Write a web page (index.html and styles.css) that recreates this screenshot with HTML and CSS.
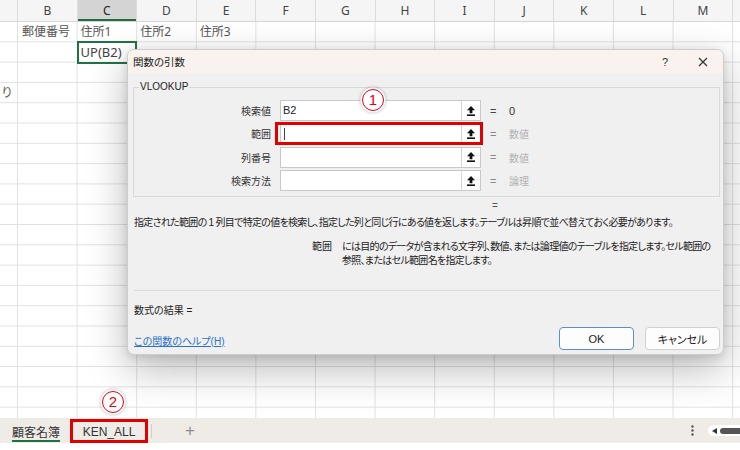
FILE: index.html
```html
<!DOCTYPE html>
<html lang="ja">
<head>
<meta charset="utf-8">
<title>関数の引数</title>
<link rel="stylesheet" href="styles.css">
</head>
<body>
<div class="app">
  <div class="sheet">
    <div class="col-heads">
      <div class="ch ch-a"></div>
      <div class="ch">B</div>
      <div class="ch ch-active">C</div>
      <div class="ch">D</div>
      <div class="ch">E</div>
      <div class="ch">F</div>
      <div class="ch">G</div>
      <div class="ch">H</div>
      <div class="ch">I</div>
      <div class="ch">J</div>
      <div class="ch">K</div>
      <div class="ch">L</div>
      <div class="ch">M</div>
    </div>
    <div class="grid">
      <div class="cell pos-b1">郵便番号</div>
      <div class="cell pos-c1">住所1</div>
      <div class="cell pos-d1">住所2</div>
      <div class="cell pos-e1">住所3</div>
      <div class="cell pos-c2 selected">UP(B2)</div>
      <div class="cell pos-a4">り</div>
    </div>
  </div>

  <div class="tabbar">
    <div class="tab tab-1">顧客名簿</div>
    <div class="tab tab-2">KEN_ALL</div>
    <div class="tab-sep"></div>
    <div class="tab-add">+</div>
    <div class="tab-spacer"></div>
    <svg class="tab-more" width="3" height="11" viewBox="0 0 3 11"><circle cx="1.5" cy="1.5" r="1.2" fill="#555"/><circle cx="1.5" cy="5.5" r="1.2" fill="#555"/><circle cx="1.5" cy="9.5" r="1.2" fill="#555"/></svg>
    <div class="nav-pill">
      <svg class="nav-prev" width="5" height="6" viewBox="0 0 5 6"><path d="M0 3 L5 0 V6 Z" fill="#333"/></svg>
      <span class="nav-thumb"></span>
    </div>
  </div>
  <div class="bottom-strip"></div>

  <div class="dialog">
    <div class="dlg-title">
      <span class="dlg-title-text">関数の引数</span>
      <span class="dlg-help">?</span>
      <svg class="dlg-close" width="10" height="10" viewBox="0 0 10 10"><path d="M1 1 L9 9 M9 1 L1 9" stroke="#333" stroke-width="1.2" fill="none"/></svg>
    </div>
    <div class="dlg-body">
      <fieldset class="group">
        <legend class="group-legend">VLOOKUP</legend>
        <div class="args">
          <div class="arg-label">検索値</div>
          <div class="inp"><span class="inp-text">B2</span><span class="inp-btn"><svg width="8" height="10" viewBox="0 0 8 10"><path d="M4 0 L8 4.2 H5.4 V7.2 H2.6 V4.2 H0 Z" fill="#111"/><rect x="0" y="8.4" width="8" height="1.6" fill="#111"/></svg></span></div>
          <div class="arg-eq strong">=</div>
          <div class="arg-val strong">0</div>

          <div class="arg-label">範囲</div>
          <div class="inp hl"><span class="inp-text"><span class="caret"></span></span><span class="inp-btn"><svg width="8" height="10" viewBox="0 0 8 10"><path d="M4 0 L8 4.2 H5.4 V7.2 H2.6 V4.2 H0 Z" fill="#111"/><rect x="0" y="8.4" width="8" height="1.6" fill="#111"/></svg></span></div>
          <div class="arg-eq">=</div>
          <div class="arg-val">数値</div>

          <div class="arg-label">列番号</div>
          <div class="inp"><span class="inp-text"></span><span class="inp-btn"><svg width="8" height="10" viewBox="0 0 8 10"><path d="M4 0 L8 4.2 H5.4 V7.2 H2.6 V4.2 H0 Z" fill="#111"/><rect x="0" y="8.4" width="8" height="1.6" fill="#111"/></svg></span></div>
          <div class="arg-eq">=</div>
          <div class="arg-val">数値</div>

          <div class="arg-label">検索方法</div>
          <div class="inp"><span class="inp-text"></span><span class="inp-btn"><svg width="8" height="10" viewBox="0 0 8 10"><path d="M4 0 L8 4.2 H5.4 V7.2 H2.6 V4.2 H0 Z" fill="#111"/><rect x="0" y="8.4" width="8" height="1.6" fill="#111"/></svg></span></div>
          <div class="arg-eq">=</div>
          <div class="arg-val">論理</div>
        </div>
      </fieldset>
      <div class="eq-line">=</div>
      <div class="desc">指定された範囲の 1 列目で特定の値を検索し、指定した列と同じ行にある値を返します。テーブルは昇順で並べ替えておく必要があります。</div>
      <div class="arg-desc">
        <div class="arg-desc-name">範囲</div>
        <div class="arg-desc-text">には目的のデータが含まれる文字列、数値、または論理値のテーブルを指定します。セル範囲の<br>参照、またはセル範囲名を指定します。</div>
      </div>
      <div class="sep"></div>
      <div class="result">数式の結果 =</div>
      <div class="foot">
        <a class="help-link" href="#">この関数のヘルプ(H)</a>
        <button class="btn btn-ok">OK</button>
        <button class="btn btn-cancel">キャンセル</button>
      </div>
    </div>
  </div>

  <div class="marker marker-1">1</div>
  <div class="marker marker-2">2</div>
</div>
</body>
</html>
```

FILE: styles.css
```css
* { box-sizing: border-box; }
html, body { margin: 0; padding: 0; }
body {
  width: 740px;
  height: 450px;
  overflow: hidden;
  background: #fff;
  font-family: "Noto Sans", "Noto Sans CJK JP", sans-serif;
}
.app {
  position: relative;
  width: 740px;
  height: 450px;
  display: flex;
  flex-direction: column;
}

/* ---------- sheet ---------- */
.sheet {
  flex: 1;
  display: flex;
  flex-direction: column;
  overflow: hidden;
}
.col-heads {
  display: flex;
  height: 22px;
  flex: none;
  background: #f5f5f5;
  border-bottom: 1px solid #d6d6d6;
}
.ch {
  flex: none;
  width: 59.6px;
  border-right: 1px solid #dcdcdc;
  text-align: center;
  font-size: 12px;
  line-height: 21px;
  color: #444;
}
.ch-a { width: 18px; }
.ch-active {
  background: #d4d4d4;
  color: #222;
  box-shadow: inset 0 -2px 0 #1e6e42;
}
.grid {
  flex: 1;
  display: grid;
  grid-template-columns: 18px repeat(12, 59.6px);
  grid-auto-rows: 20.3px;
  background-image:
    linear-gradient(to right, transparent 58.6px, #e1e1e1 58.6px),
    linear-gradient(to bottom, transparent 19.3px, #e1e1e1 19.3px);
  background-size: 59.6px 100%, 100% 20.3px;
  background-position: 18px 0, 0 0;
  background-repeat: repeat-x, repeat-y;
}
.cell {
  font-family: "Noto Sans", "Noto Sans CJK JP", sans-serif;
  font-size: 12px;
  line-height: 20px;
  color: #555;
  padding: 0 4px;
  white-space: nowrap;
  overflow: hidden;
}
.pos-b1 { grid-column: 2; grid-row: 1; }
.pos-c1 { grid-column: 3; grid-row: 1; padding-left: 3px; }
.pos-d1 { grid-column: 4; grid-row: 1; padding-left: 3px; }
.pos-e1 { grid-column: 5; grid-row: 1; padding-left: 3px; }
.pos-c2 { grid-column: 3; grid-row: 2; }
.pos-a4 { grid-column: 1; grid-row: 4; padding: 0 0 0 1px; overflow: visible; }
.selected {
  margin: -1px 0 -1px -1px;
  border: 2px solid #217346;
  padding-left: 2px;
  line-height: 18px;
  color: #444;
  font-size: 13px;
}

/* ---------- tab bar ---------- */
.tabbar {
  flex: none;
  height: 25px;
  background: #efebe7;
  display: flex;
  align-items: center;
}
.tab {
  align-self: flex-start;
  font-size: 12px;
  color: #333;
  white-space: nowrap;
}
.tab-1 {
  margin-left: 12px;
  margin-top: 6px;
  height: 18px;
  line-height: 16px;
  border-bottom: 2px solid #1e7145;
  font-family: "Noto Sans CJK JP", sans-serif;
}
.tab-2 {
  margin-left: 10px;
  margin-top: 1px;
  width: 78px;
  height: 24px;
  border: 3px solid #e10000;
  padding-top: 2px;
  line-height: 16px;
  text-align: center;
  font-family: "Liberation Sans", sans-serif;
  color: #333;
}
.tab-sep {
  width: 1px;
  height: 14px;
  background: #d2cdc8;
  margin-left: 3px;
}
.tab-add {
  margin-left: 33px;
  font-size: 17px;
  line-height: 17px;
  color: #8d8d8d;
  font-family: "Liberation Sans", sans-serif;
}
.tab-spacer { flex: 1; }
.tab-more { margin-right: 14px; }
.nav-pill {
  width: 32px;
  height: 11px;
  background: #fff;
  border-radius: 6px 0 0 6px;
  display: flex;
  align-items: center;
  padding-left: 4px;
}
.nav-prev { flex: none; }
.nav-thumb {
  margin-left: 3px;
  flex: 1;
  height: 6px;
  background: #555;
  border-radius: 3px 0 0 3px;
}
.bottom-strip {
  flex: none;
  height: 7px;
  background: #fff;
}

/* ---------- dialog ---------- */
.dialog {
  position: absolute;
  left: 127px;
  top: 49px;
  width: 597px;
  height: 306px;
  background: #f0f0f0;
  border: 1px solid #cdcdcd;
  border-radius: 7px;
  box-shadow: 0 14px 40px rgba(0, 0, 0, 0.28), 0 2px 8px rgba(0, 0, 0, 0.12);
  overflow: hidden;
  font-family: "Liberation Sans", "Noto Sans CJK JP", sans-serif;
  font-size: 10px;
  color: #222;
  font-feature-settings: "palt";
  display: flex;
  flex-direction: column;
}
.dlg-title {
  flex: none;
  height: 23px;
  background: #f9f2ee;
  display: flex;
  align-items: center;
  padding-left: 5px;
}
.dlg-title-text { font-size: 10.5px; color: #222; }
.dlg-help {
  margin-left: auto;
  width: 12px;
  text-align: center;
  font-size: 11px;
  color: #333;
}
.dlg-close {
  margin-left: 27px;
  margin-right: 15px;
}
.dlg-body {
  flex: 1;
  padding: 0 3px 0 5px;
  display: flex;
  flex-direction: column;
}
.group {
  margin: 7px 0 0;
  padding: 5px 0 4px 0;
  border: 1px solid #d9d9d9;
  min-width: 0;
}
.group-legend {
  margin-left: 5px;
  padding: 0 1px;
  font-size: 10px;
  line-height: 14px;
  color: #222;
}
.args {
  display: grid;
  grid-template-columns: 137px 201px 10px 1fr;
  column-gap: 9px;
  grid-auto-rows: 23.33px;
  align-items: center;
}
.arg-label {
  text-align: right;
  color: #333;
}
.inp {
  position: relative;
  height: 21px;
  background: #fff;
  border: 1px solid #c8c8c8;
  display: flex;
  align-items: stretch;
}
.inp-text {
  flex: 1;
  padding-left: 2px;
  font-size: 11px;
  line-height: 19px;
  color: #222;
  display: flex;
  align-items: center;
}
.caret {
  display: block;
  width: 1px;
  height: 12px;
  background: #444;
  margin-left: 1px;
}
.inp-btn {
  width: 19px;
  flex: none;
  border-left: 1px solid #d4d4d4;
  display: flex;
  align-items: center;
  justify-content: center;
}
.hl::after {
  content: "";
  position: absolute;
  left: -6px;
  right: -3px;
  top: -2px;
  bottom: -2px;
  border: 3px solid #e10000;
}
.arg-eq { color: #888; font-size: 11px; }
.arg-val { color: #b2b2b2; }
.arg-eq.strong { color: #444; }
.arg-val.strong { color: #333; font-size: 11px; }
.eq-line {
  margin-top: 2px;
  line-height: 14px;
  padding-left: 359px;
  color: #555;
}
.desc {
  margin-top: 3px;
  line-height: 14px;
  padding-left: 1px;
  white-space: nowrap;
  letter-spacing: -0.7px;
  color: #222;
}
.arg-desc {
  margin-top: 10px;
  display: grid;
  grid-template-columns: 199px 1fr;
  column-gap: 10px;
  line-height: 13.4px;
}
.arg-desc-name { text-align: right; color: #222; }
.arg-desc-text { white-space: nowrap; letter-spacing: -0.7px; color: #222; }
.sep {
  margin-top: 23px;
  margin-left: 1px;
  height: 1px;
  background: #dcdcdc;
}
.result {
  margin-top: 13px;
  line-height: 14px;
  padding-left: 1px;
}
.foot {
  margin-top: 9px;
  height: 23px;
  display: flex;
  align-items: center;
}
.help-link {
  margin-top: 3px;
  margin-left: 1px;
  color: #2a72c9;
  text-decoration: underline;
}
.btn {
  width: 75px;
  height: 23px;
  border-radius: 4px;
  font-family: "Liberation Sans", "Noto Sans CJK JP", sans-serif;
  font-feature-settings: "palt";
  font-size: 11px;
  color: #222;
  background: #fdfdfd;
  padding: 0;
}
.btn-ok {
  margin-left: auto;
  border: 1px solid #5b8fd0;
}
.btn-cancel {
  margin-left: 11px;
  border: 1px solid #d0d0d0;
}

/* ---------- markers ---------- */
.marker {
  position: absolute;
  width: 22px;
  height: 22px;
  border-radius: 50%;
  background: #fff;
  border: 1.5px solid #e60012;
  box-shadow: 0 0 0 1.5px #fff, 0 0 3px 2px rgba(0, 0, 0, 0.22);
  color: #e60012;
  font-family: "Liberation Sans", sans-serif;
  font-size: 15px;
  line-height: 19px;
  text-align: center;
}
.marker-1 { left: 362px; top: 89px; }
.marker-2 { left: 102px; top: 391px; }
```
